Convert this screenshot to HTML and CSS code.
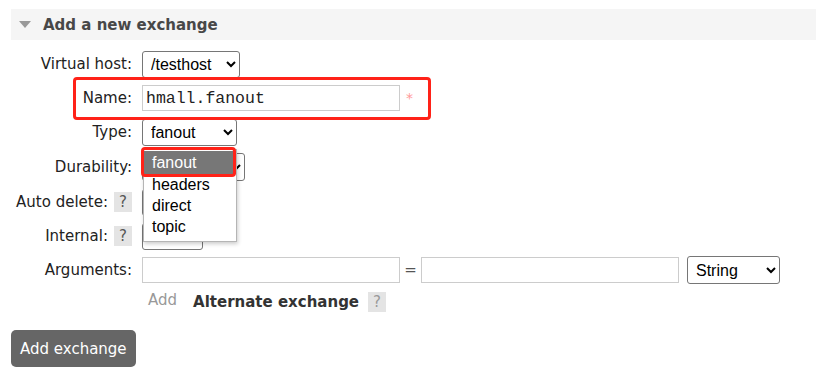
FILE: index.html
```html
<!DOCTYPE html>
<html lang="en">

<head>
    <meta charset="UTF-8">
    <meta name="viewport" content="width=device-width, initial-scale=1.0">
    <title>Add a new exchange</title>
    <link rel="stylesheet" href="styles.css">
</head>

<body>
    <div class="section">
        <h2 class="section-head"><span class="caret"></span>Add a new exchange</h2>

        <div class="form">
            <div class="row">
                <div class="lbl">Virtual host:</div>
                <div class="field">
                    <select class="sel sel-vhost"><option>/testhost</option></select>
                </div>
            </div>

            <div class="row row-name">
                <div class="lbl">Name:</div>
                <div class="field">
                    <input class="txt mono" type="text" value="hmall.fanout">
                    <span class="req">*</span>
                </div>
                <div class="mark mark-name"></div>
            </div>

            <div class="row">
                <div class="lbl">Type:</div>
                <div class="field">
                    <select class="sel sel-type"><option>fanout</option></select>
                    <!-- open list of the type select -->
                    <ul class="dropdown">
                        <li class="opt active">fanout</li>
                        <li class="opt">headers</li>
                        <li class="opt">direct</li>
                        <li class="opt">topic</li>
                    </ul>
                    <div class="mark mark-opt"></div>
                </div>
            </div>

            <div class="row row-tall">
                <div class="lbl">Durability:</div>
                <div class="field">
                    <select class="sel sel-dur"><option>Durable</option></select>
                </div>
            </div>

            <div class="row">
                <div class="lbl">Auto delete: <span class="help">?</span></div>
                <div class="field">
                    <select class="sel sel-yn"><option>No</option></select>
                </div>
            </div>

            <div class="row">
                <div class="lbl">Internal: <span class="help">?</span></div>
                <div class="field">
                    <select class="sel sel-yn"><option>No</option></select>
                </div>
            </div>

            <div class="row">
                <div class="lbl">Arguments:</div>
                <div class="field">
                    <input class="txt" type="text">
                    <span class="eq">=</span>
                    <input class="txt" type="text">
                    <select class="sel sel-argtype"><option>String</option></select>
                </div>
            </div>

            <div class="row row-add">
                <div class="lbl"></div>
                <div class="field">
                    <span class="add-link">Add</span>
                    <span class="alt">Alternate exchange</span>
                    <span class="help help-light">?</span>
                </div>
            </div>
        </div>

        <button class="btn">Add exchange</button>
    </div>
</body>

</html>
```

FILE: styles.css
```css
body {
    margin: 0;
    background-color: #fff;
    color: #222;
    font-family: "DejaVu Sans", Verdana, sans-serif;
    font-size: 15px;
}

.section {
    padding: 9px 0 0 11px;
}

.section-head {
    display: flex;
    align-items: center;
    height: 31px;
    margin: 0;
    padding-left: 8px;
    background-color: #f5f5f5;
    color: #484848;
    font-size: 15px;
    font-weight: bold;
}

.caret {
    width: 0;
    height: 0;
    margin-right: 12px;
    border-left: 6px solid transparent;
    border-right: 6px solid transparent;
    border-top: 7px solid #999;
}

.form {
    margin-top: 7px;
}

.row {
    position: relative;
    display: flex;
    align-items: center;
    height: 34px;
}

.row-tall {
    height: 36px;
}

.row-add {
    height: 30px;
}

.lbl {
    display: flex;
    align-items: center;
    justify-content: flex-end;
    gap: 6px;
    width: 121px;
    white-space: nowrap;
}

.field {
    position: relative;
    display: flex;
    align-items: center;
    margin-left: 10px;
}

.sel {
    height: 27px;
    padding: 0 4px;
    border: 1px solid #767676;
    border-radius: 3px;
    background-color: #fff;
    color: #000;
    font-family: "Liberation Sans", Arial, sans-serif;
    font-size: 16px;
}

.sel-vhost {
    width: 98px;
}

.sel-type {
    width: 95px;
}

.sel-dur {
    width: 103px;
    height: 28px;
}

.sel-yn {
    width: 61px;
}

.sel-argtype {
    width: 93px;
    height: 28px;
    margin-left: 8px;
}

.txt {
    box-sizing: border-box;
    width: 258px;
    height: 26px;
    padding: 0 3px;
    border: 1px solid #ccc;
    font-family: "Liberation Sans", Arial, sans-serif;
    font-size: 16px;
}

.mono {
    font-family: "Liberation Mono", "Courier New", monospace;
    font-size: 16.5px;
    color: #222;
}

.req {
    margin-left: 6px;
    color: #f99;
    font-size: 14px;
}

.eq {
    width: 21px;
    text-align: center;
    color: #555;
}

.help {
    display: inline-flex;
    align-items: center;
    justify-content: center;
    width: 18px;
    height: 20px;
    background-color: #e4e4e4;
    color: #555;
    font-size: 15px;
}

.help-light {
    margin-left: 9px;
    color: #999;
}

.add-link {
    margin: -4px 0 0 6px;
    color: #999;
}

.alt {
    margin-left: 16px;
    color: #333;
    font-weight: bold;
}

.dropdown {
    position: absolute;
    top: 30px;
    left: 1px;
    z-index: 2;
    width: 92px;
    margin: 0;
    padding: 1px 0 4px;
    list-style: none;
    background-color: #fff;
    border: 1px solid #b5b5b5;
    box-shadow: 1px 2px 4px rgba(0, 0, 0, 0.2);
    font-family: "Liberation Sans", Arial, sans-serif;
    font-size: 16px;
    color: #000;
}

.opt {
    height: 21px;
    padding-left: 8px;
    line-height: 21px;
}

.opt.active {
    height: 23px;
    line-height: 23px;
    background-color: #777;
    color: #fff;
}

/* red annotation frames */
.mark {
    position: absolute;
    z-index: 3;
    border: 3px solid #ff2218;
    border-radius: 4px;
}

.mark-name {
    top: -4px;
    left: 62px;
    width: 352px;
    height: 37px;
}

.mark-opt {
    top: 28px;
    left: -1px;
    width: 89px;
    height: 24px;
}

.btn {
    margin-top: 13px;
    padding: 0 9px;
    height: 37px;
    border: none;
    border-radius: 5px;
    background-color: #666;
    color: #fff;
    font-family: "DejaVu Sans", Verdana, sans-serif;
    font-size: 15px;
    white-space: nowrap;
    cursor: pointer;
}
```
